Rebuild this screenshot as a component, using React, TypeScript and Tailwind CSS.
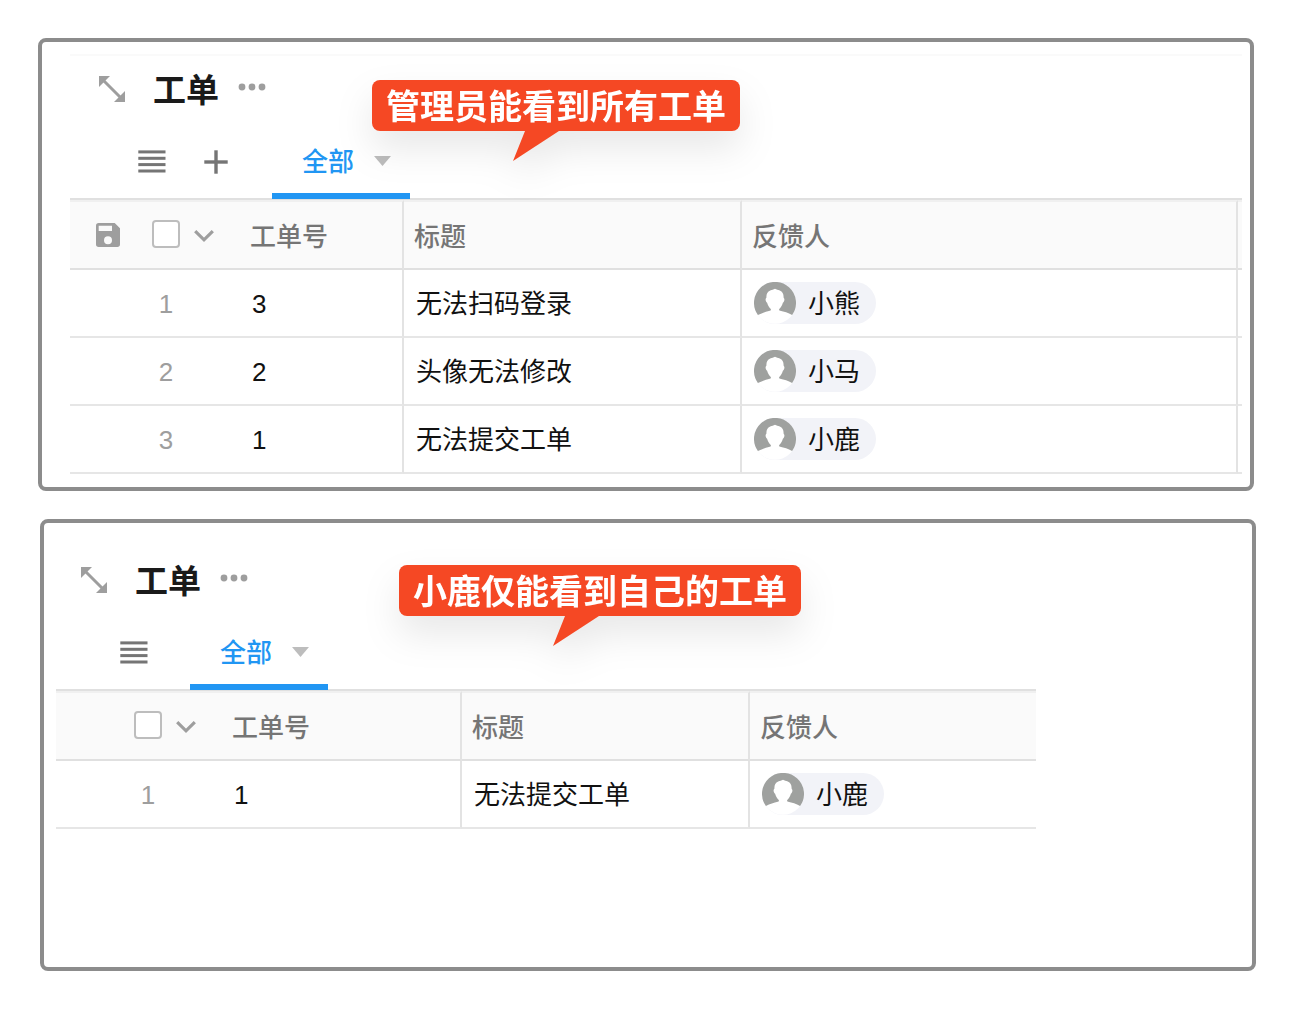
import React from "react";

type Ticket = { id: number; title: string; reporter: string };

function ExpandIcon() {
  return (
    <svg width="26" height="26" viewBox="0 0 26 26" fill="#9e9e9e" aria-hidden="true">
      <path d="M0 0h11L0 11z" />
      <path d="M26 26H15L26 15z" />
      <path d="M4 4l18 18" stroke="#9e9e9e" strokeWidth="3" />
    </svg>
  );
}

function MoreIcon() {
  return (
    <svg width="28" height="8" viewBox="0 0 28 8" fill="#9e9e9e" aria-hidden="true">
      <circle cx="4" cy="4" r="3.4" />
      <circle cx="14" cy="4" r="3.4" />
      <circle cx="24" cy="4" r="3.4" />
    </svg>
  );
}

function ListIcon() {
  return (
    <svg width="28" height="24" viewBox="0 0 28 24" fill="#757575" aria-hidden="true">
      <rect x="0.3" y="0.4" width="27.2" height="3" />
      <rect x="0.3" y="6.8" width="27.2" height="3" />
      <rect x="0.3" y="13.1" width="27.2" height="3" />
      <rect x="0.3" y="19.5" width="27.2" height="3" />
    </svg>
  );
}

function PlusIcon() {
  return (
    <svg width="24" height="24" viewBox="0 0 24 24" fill="#757575" aria-hidden="true">
      <rect x="10.3" y="0.3" width="3.4" height="23.4" />
      <rect x="0.3" y="10.3" width="23.4" height="3.4" />
    </svg>
  );
}

function SaveIcon() {
  return (
    <svg width="24" height="24" viewBox="0 0 24 24" fill="#9e9e9e" aria-hidden="true">
      <path
        fillRule="evenodd"
        d="M2.7 0H18.700l5.300 5.300v16a2.700 2.700 0 0 1-2.700 2.700H2.700A2.700 2.700 0 0 1 0 21.300V2.700A2.700 2.700 0 0 1 2.700 0zM2.700 2.700V8H16V2.700zM12 13.200a4 4 0 1 0 0 8a4 4 0 1 0 0-8z"
      />
    </svg>
  );
}

function ChevronIcon() {
  return (
    <svg width="20" height="14" viewBox="0 0 20 14" fill="none" aria-hidden="true">
      <path d="M1.200 2.200L10 10.800L18.800 2.200" stroke="#9e9e9e" strokeWidth="3.200" />
    </svg>
  );
}

function Avatar() {
  return (
    <svg width="42" height="42" viewBox="0 0 42 42" aria-hidden="true">
      <circle cx="21" cy="21" r="20.8" fill="#fff" />
      <path
        fill="#9fa19f"
        d="M3.900 33.100c4-2.200 8.100-3.500 11.900-4.300c.9-.2 1.300-.7 1-1.700c-1.400-1.100-2.900-3.400-3.700-6.300c-.8-.4-1.400-1.700-1.500-3.300c-.1-1.200.8-1.400.8-2c-.1-3.600 1.100-6 3.800-7.100c1.800-.7 3.300-.9 4.800-1.700c1.500.8 3 1 4.800 1.700c2.700 1.100 3.900 3.500 3.800 7.100c0 .6.900.8.800 2c-.1 1.600-.7 2.900-1.500 3.300c-.8 2.900-2.300 5.200-3.700 6.300c-.3 1 .1 1.500 1 1.700c3.800.8 8 2 11.900 4.300A21 21 0 1 0 3.900 33.100z"
      />
    </svg>
  );
}

function Callout({ text, className, tailClass }: { text: string; className: string; tailClass: string }) {
  return (
    <div className={`absolute drop-shadow-[0_18px_18px_rgba(0,0,0,0.09)] ${className}`}>
      <p className="whitespace-nowrap rounded-lg bg-[#f54824] px-3.5 pt-1 text-[34px] leading-[47px] font-bold text-white">
        {text}
      </p>
      <svg width="46" height="30" viewBox="0 0 46 30" className={`block ${tailClass}`} aria-hidden="true">
        <path d="M12 0H46L0 30z" fill="#f54824" />
      </svg>
    </div>
  );
}

function TitleRow({ className }: { className: string }) {
  return (
    <div className={`flex h-[68px] items-center ${className}`}>
      <button type="button" aria-label="展开" className="mb-0.5">
        <ExpandIcon />
      </button>
      <h2 className="ml-7 pt-0.5 text-[33px] leading-[50px] font-bold text-[#1a1a1a]">工单</h2>
      <button type="button" aria-label="更多" className="mb-1.5 ml-[19px] flex h-8 items-center">
        <MoreIcon />
      </button>
    </div>
  );
}

function ViewTab({ className }: { className: string }) {
  return (
    <button
      type="button"
      className={`-mb-px flex h-[75px] items-center gap-5 self-start border-b-[6px] border-[#2196f3] pt-[7px] pr-[19px] pl-[30px] text-[26px] leading-10 font-medium text-[#2196f3] ${className}`}
    >
      全部
      <svg width="17" height="10" viewBox="0 0 17 10" className="mb-0.5" aria-hidden="true">
        <path d="M0 0H17L8.500 10z" fill="#bdbdbd" />
      </svg>
    </button>
  );
}

function TicketTable({
  tickets,
  name,
  withSave,
  widths,
}: {
  tickets: Ticket[];
  name: string;
  withSave?: boolean;
  widths: [string, string, string];
}) {
  const headBase = "h-[70px] border-t-2 border-b-2 border-t-[#f0f0f0] border-b-[#e0e0e0] bg-[#fafafa] text-left font-medium";
  const head = `${headBase} pt-1 pl-2.5`;
  const cellBase = "h-[68px] border-b-2 border-b-[#e6e6e6]";
  const cell = `${cellBase} pt-0.5 pl-3`;
  const rule = "border-r-2 border-r-[#e3e3e3]";
  return (
    <table className="w-full table-fixed border-separate border-spacing-0 text-[26px] leading-10">
      <colgroup>
        <col className={widths[0]} />
        <col className={widths[1]} />
        <col className={widths[2]} />
        <col />
        {withSave && <col className="w-1" />}
      </colgroup>
      <thead className="text-[#757575]">
        <tr>
          <th className={`${headBase} p-0`}>
            <div className={withSave ? "flex items-center pl-[26px]" : "flex items-center pl-[78px]"}>
              {withSave && (
                <button type="button" aria-label="保存" className="mr-8">
                  <SaveIcon />
                </button>
              )}
              <input
                type="checkbox"
                aria-label={`${name}全选`}
                className="mb-0.5 size-7 appearance-none rounded-[4px] border-2 border-[#bdbdbd] bg-white checked:bg-[#2196f3]"
              />
              <button type="button" aria-label="选择范围" className="mt-0.5 ml-3.5">
                <ChevronIcon />
              </button>
            </div>
          </th>
          <th className={`${head} ${rule}`}>工单号</th>
          <th className={`${head} ${rule}`}>标题</th>
          <th className={withSave ? `${head} ${rule}` : head}>反馈人</th>
          {withSave && <td className={`${headBase} p-0`} />}
        </tr>
      </thead>
      <tbody className="text-[#111]">
        {tickets.map((t, i) => (
          <tr key={t.id}>
            <td className={`${cellBase} p-0 pt-0.5 text-[#9e9e9e]`}>
              <div className={withSave ? "ml-[82px] w-7 text-center" : "ml-[78px] w-7 text-center"}>{i + 1}</div>
            </td>
            <td className={`${cell} ${rule}`}>{t.id}</td>
            <td className={`${cell} ${rule}`}>{t.title}</td>
            <td className={withSave ? `${cellBase} ${rule} py-0 pl-3` : `${cellBase} py-0 pl-3`}>
              <div className="flex h-[42px] w-fit items-center gap-3 rounded-full bg-[#f2f3f8] pr-4">
                <Avatar />
                <span className="pt-0.5">{t.reporter}</span>
              </div>
            </td>
            {withSave && <td className={`${cellBase} p-0`} />}
          </tr>
        ))}
      </tbody>
    </table>
  );
}

const allTickets: Ticket[] = [
  { id: 3, title: "无法扫码登录", reporter: "小熊" },
  { id: 2, title: "头像无法修改", reporter: "小马" },
  { id: 1, title: "无法提交工单", reporter: "小鹿" },
];

export default function App() {
  return (
    <main className="flex min-h-screen flex-col gap-7 bg-white py-[38px] font-['Liberation_Sans','Noto_Sans_CJK_SC',sans-serif]">
      <section className="relative mr-10 ml-[38px] rounded-lg border-4 border-[#8c8c8c] pt-3 pr-2 pb-[13px] pl-7">
        <div className="border-t-2 border-[#fafafa]">
          <TitleRow className="pl-[29px]" />
          <div className="flex h-[76px] items-center border-b-2 border-[#e0e0e0] pl-[68px]">
            <button type="button" aria-label="视图列表" className="mt-0.5">
              <ListIcon />
            </button>
            <button type="button" aria-label="添加视图" className="mt-0.5 ml-[38px]">
              <PlusIcon />
            </button>
            <ViewTab className="ml-11" />
          </div>
          <TicketTable name="全部工单" tickets={allTickets} withSave widths={["w-[170px]", "w-[164px]", "w-[338px]"]} />
        </div>
        <Callout text="管理员能看到所有工单" className="top-[38px] left-[330px]" tailClass="ml-[141px]" />
      </section>

      <section className="relative mr-[38px] ml-10 rounded-lg border-4 border-[#8c8c8c] pt-6 pr-[216px] pb-[138px] pl-3">
        <TitleRow className="pl-[25px]" />
        <div className="flex h-[76px] items-center border-b-2 border-[#e0e0e0] pl-16">
          <button type="button" aria-label="视图列表" className="mt-0.5">
            <ListIcon />
          </button>
          <ViewTab className="ml-[42px]" />
        </div>
        <TicketTable name="我的工单" tickets={allTickets.slice(2)} widths={["w-[166px]", "w-[240px]", "w-[288px]"]} />
        <Callout text="小鹿仅能看到自己的工单" className="top-[42px] left-[355px]" tailClass="ml-[154px]" />
      </section>
    </main>
  );
}
